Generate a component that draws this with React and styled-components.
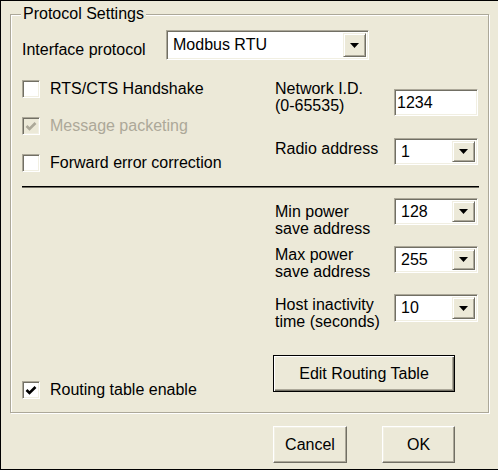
import React from "react";
import styled, { createGlobalStyle, css } from "styled-components";

const GlobalStyle = createGlobalStyle`
  html, body {
    margin: 0;
    padding: 0;
    background: #ece9d8;
  }
  body {
    font-family: "Liberation Sans", Arial, sans-serif;
    font-size: 16px;
    color: #000;
  }
  * {
    box-sizing: border-box;
  }
`;

// classic 3D edges
const sunken = css`
  border: 1px solid;
  border-color: #aca899 #fff #fff #aca899;
  box-shadow: inset 1px 1px 0 #716f64, inset -1px -1px 0 #f1efe2;
`;

const raised = css`
  border: 1px solid;
  border-color: #fff #716f64 #716f64 #fff;
  box-shadow: inset -1px -1px 0 #aca899, inset 1px 1px 0 #f1efe2;
`;

const Dialog = styled.div`
  width: 498px;
  height: 470px;
  background: #ece9d8;
  border: 1px solid #000;
  border-right: none;
  padding: 13px 0 0 9px;
  display: flex;
  flex-direction: column;
`;

const GroupBox = styled.div`
  position: relative;
  width: 479px;
  border: 1px solid #aca899;
  box-shadow: inset 1px 1px 0 #fff, 1px 1px 0 #fff;
  padding: 15px 9px 12px 11px;
`;

const Legend = styled.span`
  position: absolute;
  top: -10px;
  left: 10px;
  padding: 0 2px;
  background: #ece9d8;
  line-height: 18px;
  white-space: nowrap;
`;

const ProtocolRow = styled.div`
  display: flex;
  align-items: flex-start;
`;

const Label = styled.div`
  width: ${(p) => p.$w || 119}px;
  margin-top: ${(p) => p.$offset || 0}px;
  line-height: 17px;
  flex-shrink: 0;
`;

const Section = styled.div`
  display: grid;
  grid-template-columns: 253px 1fr;
  margin-top: ${(p) => p.$mt}px;
`;

const CheckColumn = styled.div`
  display: flex;
  flex-direction: column;
  gap: 13px;
`;

const BottomColumn = styled.div`
  display: flex;
  align-items: flex-end;
`;

const ParamColumn = styled.div`
  display: flex;
  flex-direction: column;
  padding-top: ${(p) => p.$pt || 0}px;
  padding-bottom: ${(p) => p.$pb || 0}px;
`;

const ParamRow = styled.div`
  display: flex;
  align-items: flex-start;
  height: ${(p) => (p.$h ? `${p.$h}px` : "auto")};
`;

const CheckRow = styled.div`
  display: flex;
  align-items: center;
  gap: 10px;
  height: ${(p) => p.$h || 24}px;
  color: ${(p) => (p.$disabled ? "#aca899" : "#000")};
  white-space: nowrap;
`;

const CheckBox = styled.div`
  width: 18px;
  height: 18px;
  flex-shrink: 0;
  display: flex;
  align-items: center;
  justify-content: center;
  background: ${(p) => (p.$disabled ? "#ece9d8" : "#fff")};
  ${sunken};
`;

const Combo = styled.div`
  display: flex;
  align-items: stretch;
  width: ${(p) => p.$w}px;
  height: ${(p) => p.$h}px;
  margin-top: ${(p) => p.$mt || 0}px;
  background: #fff;
  padding: 2px 2px 2px 6px;
  ${sunken};
`;

const ComboText = styled.span`
  flex: 1;
  display: flex;
  align-items: center;
  white-space: nowrap;
`;

const DropButton = styled.div`
  width: 23px;
  display: flex;
  align-items: center;
  justify-content: center;
  background: #ece9d8;
  border: 1px solid;
  border-color: #f1efe2 #716f64 #716f64 #f1efe2;
  box-shadow: inset 1px 1px 0 #fff, inset -1px -1px 0 #aca899;
`;

const TextInput = styled.div`
  display: flex;
  align-items: center;
  width: 84px;
  height: 27px;
  margin-top: ${(p) => p.$mt || 0}px;
  padding-left: 2px;
  background: #fff;
  ${sunken};
`;

const Divider = styled.div`
  margin-top: 11px;
  height: 2px;
  border-top: 1px solid #000;
  border-bottom: 1px solid #716f64;
`;

const PushButton = styled.button`
  width: ${(p) => p.$w}px;
  height: 37px;
  margin: ${(p) => p.$margin || 0};
  padding: 0;
  font: inherit;
  color: #000;
  background: #ece9d8;
  ${(p) =>
    p.$default
      ? css`
          border: 1px solid #000;
          box-shadow: inset 1px 1px 0 #fff, inset -1px -1px 0 #716f64,
            inset -2px -2px 0 #aca899;
        `
      : raised};
`;

const Footer = styled.div`
  display: flex;
  justify-content: flex-end;
  gap: 35px;
  margin-top: 13px;
  padding-right: 43px;
`;

const Arrow = () => (
  <svg width="9" height="5" viewBox="0 0 9 5">
    <polygon points="0,0 9,0 4.5,5" fill="#000" />
  </svg>
);

const Check = ({ color }) => (
  <svg width="12" height="11" viewBox="0 0 12 11">
    <polyline points="1.5,5 4.5,8 10.5,2" fill="none" stroke={color} strokeWidth="2.6" />
  </svg>
);

const Select = ({ value, w = 84, h = 27, mt }) => (
  <Combo $w={w} $h={h} $mt={mt}>
    <ComboText>{value}</ComboText>
    <DropButton>
      <Arrow />
    </DropButton>
  </Combo>
);

const Option = ({ label, checked, disabled, h }) => (
  <CheckRow $disabled={disabled} $h={h}>
    <CheckBox $disabled={disabled}>
      {checked && <Check color={disabled ? "#aca899" : "#000"} />}
    </CheckBox>
    {label}
  </CheckRow>
);

export default function App() {
  return (
    <>
      <GlobalStyle />
      <Dialog>
        <GroupBox>
          <Legend>Protocol Settings</Legend>
          <ProtocolRow>
            <Label $w={144} $offset={11}>
              Interface protocol
            </Label>
            <Select value="Modbus RTU" w={203} h={30} />
          </ProtocolRow>

          <Section $mt={17}>
            <CheckColumn>
              <Option label="RTS/CTS Handshake" />
              <Option label="Message packeting" checked disabled />
              <Option label="Forward error correction" />
            </CheckColumn>
            <ParamColumn $pt={3}>
              <ParamRow $h={58}>
                <Label>
                  Network I.D.
                  <br />
                  (0-65535)
                </Label>
                <TextInput $mt={9}>1234</TextInput>
              </ParamRow>
              <ParamRow>
                <Label $offset={2}>Radio address</Label>
                <Select value="1" />
              </ParamRow>
            </ParamColumn>
          </Section>

          <Divider />

          <Section $mt={10}>
            <BottomColumn>
              <Option label="Routing table enable" checked h={20} />
            </BottomColumn>
            <ParamColumn $pb={8}>
              <ParamRow $h={48}>
                <Label $offset={5}>
                  Min power
                  <br />
                  save address
                </Label>
                <Select value="128" />
              </ParamRow>
              <ParamRow $h={48}>
                <Label>
                  Max power
                  <br />
                  save address
                </Label>
                <Select value="255" />
              </ParamRow>
              <ParamRow $h={48}>
                <Label $offset={2}>
                  Host inactivity
                  <br />
                  time (seconds)
                </Label>
                <Select value="10" h={28} />
              </ParamRow>
              <PushButton $default $w={182} $margin="13px 0 0 -2px">
                Edit Routing Table
              </PushButton>
            </ParamColumn>
          </Section>
        </GroupBox>

        <Footer>
          <PushButton $w={74}>Cancel</PushButton>
          <PushButton $w={73}>OK</PushButton>
        </Footer>
      </Dialog>
    </>
  );
}
